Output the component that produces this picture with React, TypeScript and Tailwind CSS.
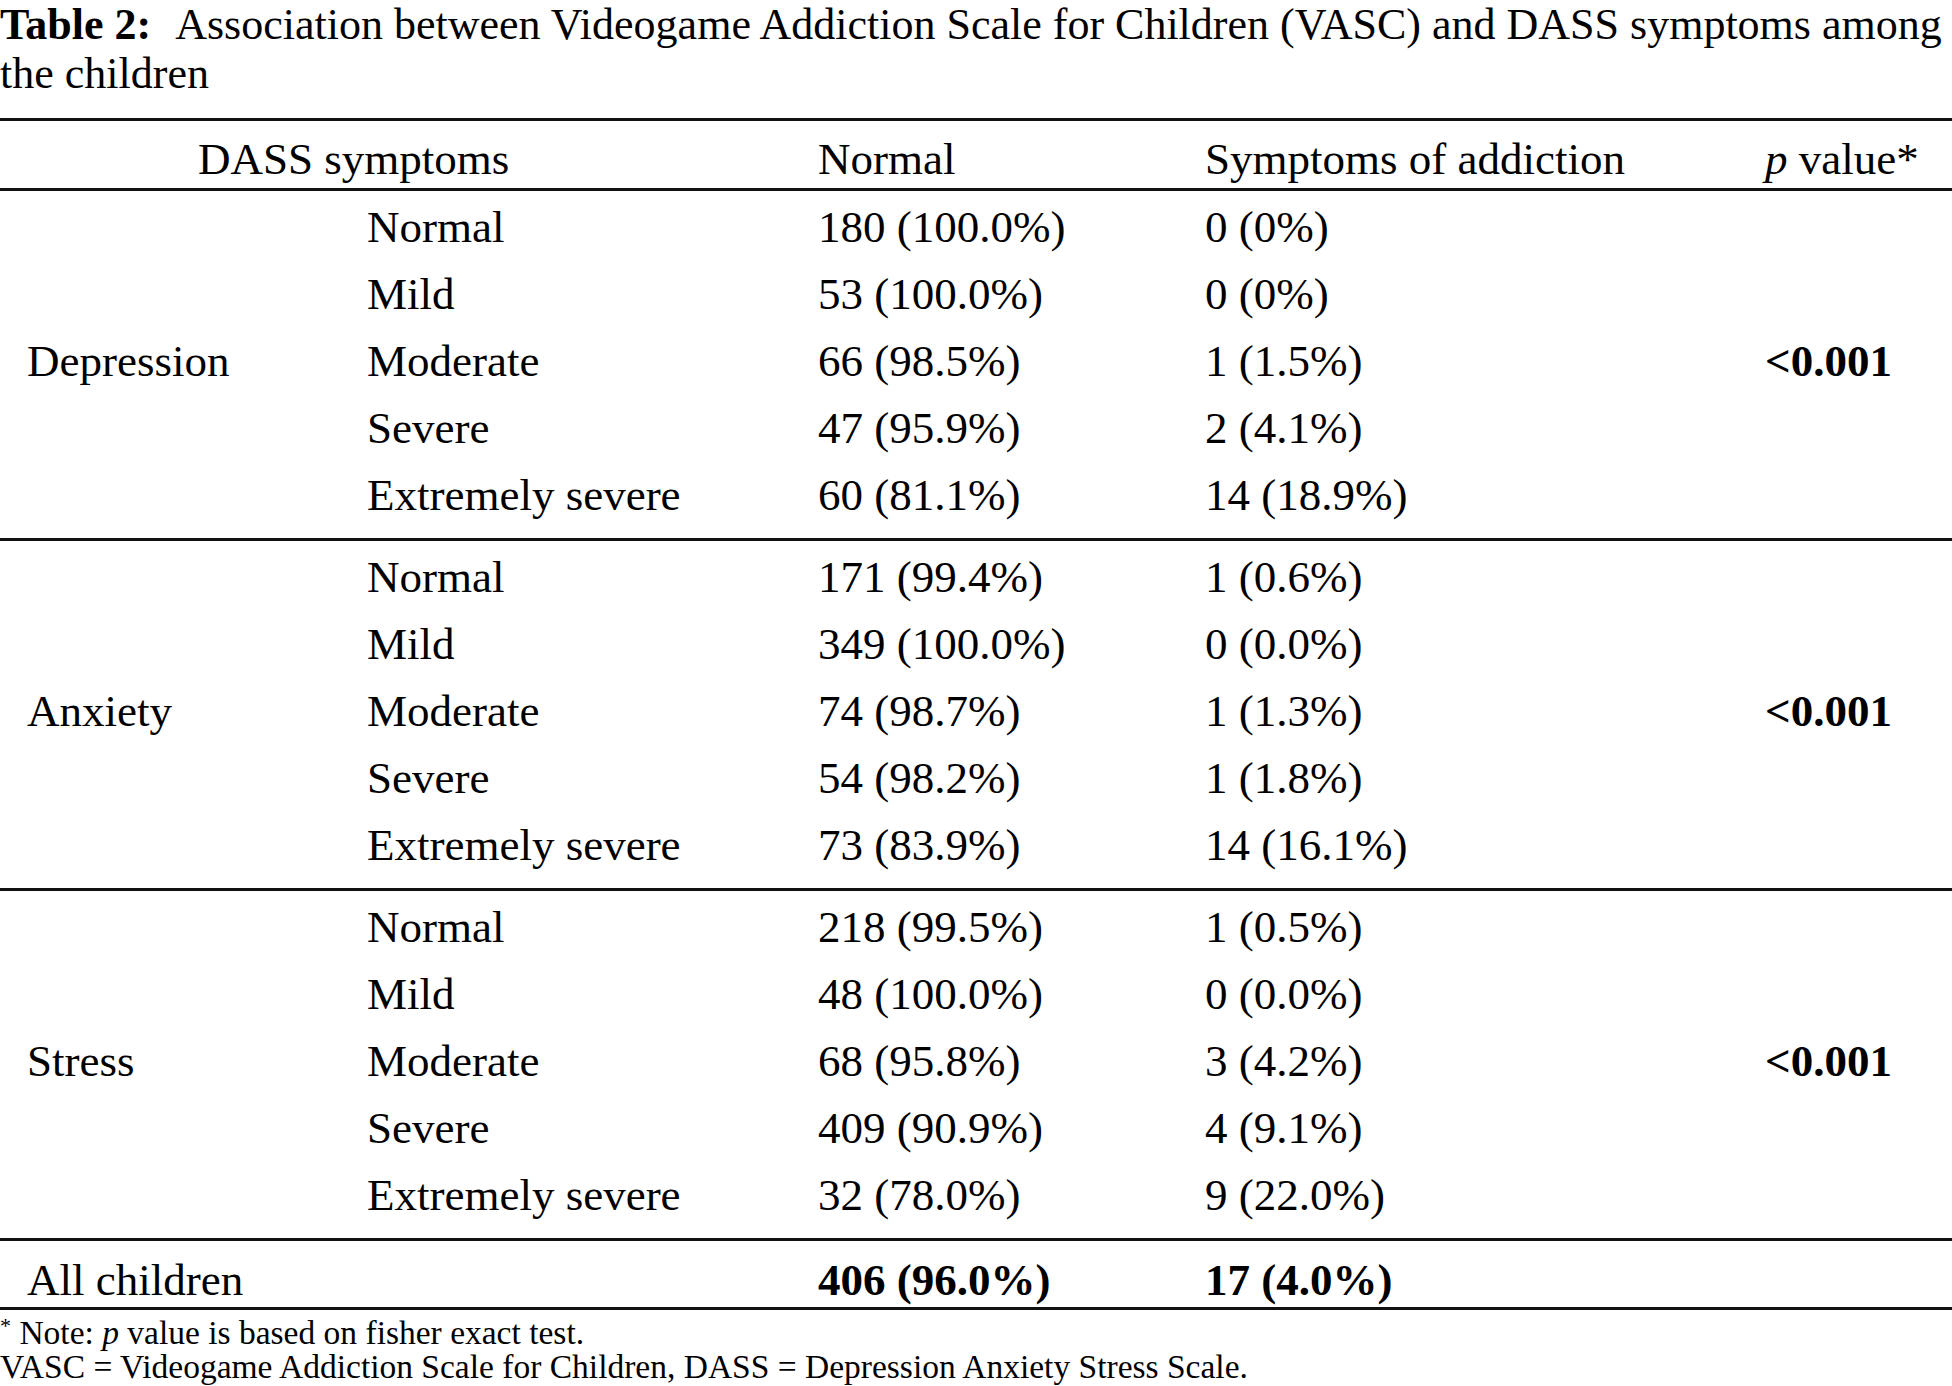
import React from "react";

type Row = { level: string; normal: string; addicted: string };
type Group = { name: string; p: string; rows: Row[] };

const groups: Group[] = [
  {
    name: "Depression",
    p: "<0.001",
    rows: [
      { level: "Normal", normal: "180 (100.0%)", addicted: "0 (0%)" },
      { level: "Mild", normal: "53 (100.0%)", addicted: "0 (0%)" },
      { level: "Moderate", normal: "66 (98.5%)", addicted: "1 (1.5%)" },
      { level: "Severe", normal: "47 (95.9%)", addicted: "2 (4.1%)" },
      { level: "Extremely severe", normal: "60 (81.1%)", addicted: "14 (18.9%)" },
    ],
  },
  {
    name: "Anxiety",
    p: "<0.001",
    rows: [
      { level: "Normal", normal: "171 (99.4%)", addicted: "1 (0.6%)" },
      { level: "Mild", normal: "349 (100.0%)", addicted: "0 (0.0%)" },
      { level: "Moderate", normal: "74 (98.7%)", addicted: "1 (1.3%)" },
      { level: "Severe", normal: "54 (98.2%)", addicted: "1 (1.8%)" },
      { level: "Extremely severe", normal: "73 (83.9%)", addicted: "14 (16.1%)" },
    ],
  },
  {
    name: "Stress",
    p: "<0.001",
    rows: [
      { level: "Normal", normal: "218 (99.5%)", addicted: "1 (0.5%)" },
      { level: "Mild", normal: "48 (100.0%)", addicted: "0 (0.0%)" },
      { level: "Moderate", normal: "68 (95.8%)", addicted: "3 (4.2%)" },
      { level: "Severe", normal: "409 (90.9%)", addicted: "4 (9.1%)" },
      { level: "Extremely severe", normal: "32 (78.0%)", addicted: "9 (22.0%)" },
    ],
  },
];

function Rule() {
  return <div className="h-[3px] w-full bg-[#111]" />;
}

function GroupBlock({ group }: { group: Group }) {
  return (
    <div className="flex pt-[3px] pb-[9px]">
      <div className="flex w-[367px] items-center pl-[27px]">{group.name}</div>
      <div className="flex flex-col">
        {group.rows.map((r) => (
          <div key={r.level} className="flex leading-[67px]">
            <div className="w-[451px]">{r.level}</div>
            <div className="w-[387px]">{r.normal}</div>
            <div className="w-[560px]">{r.addicted}</div>
          </div>
        ))}
      </div>
      <div className="flex flex-1 items-center font-bold">{group.p}</div>
    </div>
  );
}

export default function App() {
  return (
    <div className="h-[1386px] w-[1952px] overflow-hidden bg-white font-['Liberation_Serif',serif] text-black">
      {/* caption */}
      <div className="text-[44px] leading-[49px]">
        <div className="whitespace-nowrap">
          <span className="font-bold">Table 2:</span>
          <span className="ml-[24px]">
            Association between Videogame Addiction Scale for Children (VASC) and DASS symptoms among
          </span>
        </div>
        <div>the children</div>
      </div>

      <div className="mt-[20px] text-[45px]">
        <Rule />
        <div className="flex pt-[10px] leading-[57px]">
          <div className="w-[818px] pl-[198px]">DASS symptoms</div>
          <div className="w-[387px]">Normal</div>
          <div className="w-[560px]">Symptoms of addiction</div>
          <div className="flex-1">
            <span className="italic">p</span> value*
          </div>
        </div>
        <Rule />
        {groups.map((g, i) => (
          <div key={g.name}>
            <GroupBlock group={g} />
            {i < groups.length - 1 && <Rule />}
          </div>
        ))}
        <Rule />
        <div className="flex pt-[12px] leading-[54px]">
          <div className="w-[818px] pl-[27px]">All children</div>
          <div className="w-[387px] font-bold">406 (96.0%)</div>
          <div className="w-[560px] font-bold">17 (4.0%)</div>
        </div>
        <Rule />
      </div>

      <div className="mt-[6px] text-[33.5px] leading-[34px]">
        <div>
          <sup className="text-[22px]">*</sup> Note: <span className="italic">p</span> value is based on fisher exact test.
        </div>
        <div>VASC = Videogame Addiction Scale for Children, DASS = Depression Anxiety Stress Scale.</div>
      </div>
    </div>
  );
}
